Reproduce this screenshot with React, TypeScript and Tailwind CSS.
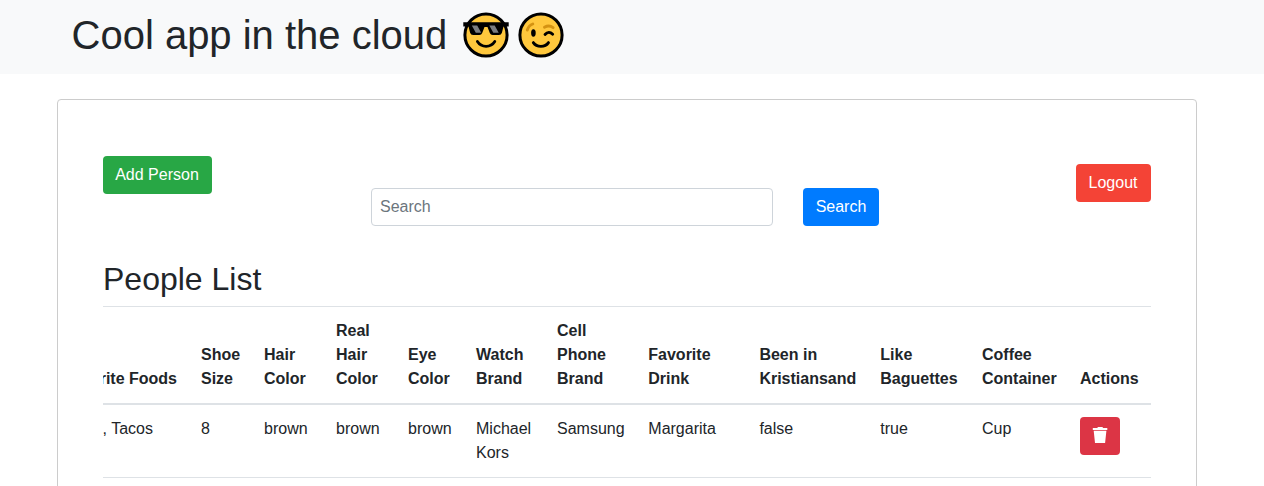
const columns = [
  { title: 'Shoe Size', value: '8' },
  { title: 'Hair Color', value: 'brown' },
  { title: 'Real Hair Color', value: 'brown' },
  { title: 'Eye Color', value: 'brown' },
  { title: 'Watch Brand', value: 'Michael Kors' },
  { title: 'Cell Phone Brand', value: 'Samsung' },
  { title: 'Favorite Drink', value: 'Margarita' },
  { title: 'Been in Kristiansand', value: 'false' },
  { title: 'Like Baguettes', value: 'true' },
  { title: 'Coffee Container', value: 'Cup' },
];

const gridColumns =
  'grid grid-cols-[86px_63px_72px_72px_68px_81px_91.3px_111.1px_120.9px_101.7px_98px_83px]';

function SunglassesFace() {
  return (
    <svg className="h-[50px] w-[50px]" viewBox="0 0 50 50" fill="none" aria-label="Smiling face with sunglasses">
      <circle cx="25" cy="25" r="21.1" fill="#ffc83d" stroke="#000" strokeWidth="3" />
      <path d="M2.3 12.3h45.400v4.200h-5.200l-1.600 6.200q-.7 2.400-3 2.400h-6.300q-2 0-2.800-2l-2.300-6h-3l-2.300 6q-.8 2-2.800 2h-6.300q-2.300 0-3-2.400L7.500 16.500H2.300z" fill="#000" />
      <path d="M10.800 15.600h5.400l4 7.200h-5.400z M28.300 15.600h5.400l4 7.200h-5.400z" fill="#7b7d80" />
      <path d="M16.400 31.500q3 4.800 8.700 4.800t8.700-4.800" stroke="#000" strokeWidth="2.800" strokeLinecap="round" />
    </svg>
  );
}

function WinkingFace() {
  return (
    <svg className="h-[50px] w-[50px]" viewBox="0 0 50 50" fill="none" aria-label="Winking face">
      <circle cx="25" cy="25" r="21.1" fill="#ffc83d" stroke="#000" strokeWidth="3" />
      <path d="M11.300 20q1.500-4.600 5.500-6M28.500 17.300q4.600-2.600 8.600.4" stroke="#d49312" strokeWidth="2.900" strokeLinecap="round" />
      <ellipse cx="17.4" cy="23" rx="2.3" ry="3.7" fill="#000" />
      <path d="M29 24.500q3.800-4.300 7.700-.2M17.300 32.600q2.500 3.700 7.600 3.700t7.600-3.700" stroke="#000" strokeWidth="2.800" strokeLinecap="round" />
    </svg>
  );
}

function TrashIcon() {
  return (
    <svg className="h-4 w-4" viewBox="0 0 16 16" fill="#fff">
      <path d="M.8.9h4.400L6 0h4.300l.9.900H15.300v2H.800zM1.700 3.800h12.700l-1.300 12.200H3z" />
    </svg>
  );
}

export default function App() {
  return (
    <div className="h-[486px] overflow-hidden bg-white font-['Liberation_Sans',Arial,sans-serif] text-base leading-6 text-[#212529]">
      <header className="flex h-[74px] items-start bg-[#f8f9fa] pt-[11px] pl-[71.5px]">
        <h1 className="flex h-12 items-center text-[40px] leading-[48px]">
          <span className="w-[389.5px] whitespace-nowrap">Cool app in the cloud</span>
          <span className="flex h-[50px] gap-[5px]">
            <SunglassesFace />
            <WinkingFace />
          </span>
        </h1>
      </header>
      <main className="mt-[25px] ml-[57px] h-[500px] w-[1140px] rounded border border-[#ccc] px-[45px] pt-14">
        <div className="flex h-[70px] items-start">
          <button className="h-[38px] w-[109px] rounded bg-[#28a745] pr-px text-white">Add Person</button>
          <input
            className="mt-8 ml-[159px] h-[38px] w-[402px] rounded border border-[#ced4da] px-2 placeholder:text-[#6c757d] placeholder:opacity-100"
            placeholder="Search"
          />
          <button className="mt-8 ml-[30px] h-[38px] w-[76px] rounded bg-[#007bff] text-white">Search</button>
          <button className="mt-2 ml-auto h-[38px] w-[75px] rounded bg-[#f44336] pr-px text-white">Logout</button>
        </div>
        <h2 className="mt-[34px] h-[46px] text-[32px] leading-[38px]">People List</h2>
        <section className="w-[1048px] overflow-hidden">
          <div className={`${gridColumns} h-[99px] items-end border-t border-b-2 border-[#dee2e6] pb-3 font-bold`}>
            <div className="flex justify-end overflow-hidden pr-3 whitespace-nowrap">Favorite Foods</div>
            {columns.map((c) => (
              <div key={c.title} className="px-3">{c.title}</div>
            ))}
            <div className="px-3">Actions</div>
          </div>
          <div className={`${gridColumns} h-[73px] border-b border-[#dee2e6] pt-3`}>
            <div className="flex justify-end pr-9 whitespace-nowrap">, Tacos</div>
            {columns.map((c) => (
              <div key={c.title} className="px-3">{c.value}</div>
            ))}
            <div className="px-3">
              <button className="flex h-[38px] w-10 items-center justify-center rounded bg-[#dc3545] pb-0.5">
                <TrashIcon />
              </button>
            </div>
          </div>
        </section>
      </main>
    </div>
  );
}
